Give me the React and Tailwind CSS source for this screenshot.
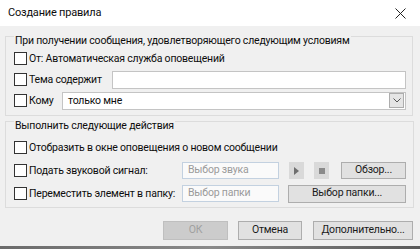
import React from 'react';

const font = { fontFamily: 'Roboto, "Noto Sans", sans-serif', letterSpacing: '-0.2px' };

function Check() {
  return <span className='w-[13px] h-[13px] border border-[#333333] bg-white shrink-0' />;
}

function Btn({ children, className = '' }) {
  return (
    <button className={`h-[17px] shrink-0 border border-[#adadad] bg-[#e1e1e1] text-[10.5px] leading-none text-[#1a1a1a] flex items-center justify-center ${className}`}>
      {children}
    </button>
  );
}

function Disabled({ placeholder }) {
  return (
    <div className='w-[97px] h-[17px] shrink-0 border border-[#c3d1e0] bg-[#fafafa] text-[#9a9a9a] px-[5px] flex items-center leading-none'>
      {placeholder}
    </div>
  );
}

export default function App() {
  return (
    <div className='w-[420px] h-[249px] bg-[#f0f0f0] flex flex-col text-[#0d0d0d] text-[10.5px] whitespace-nowrap overflow-hidden' style={font}>
      {/* Title bar */}
      <div className='h-[26px] bg-white flex items-center justify-between pl-[8px] pr-[14px] shrink-0'>
        <span className='text-[11px]'>Создание правила</span>
        <svg width='11' height='11' viewBox='0 0 11 11'>
          <path d='M0.5 0.5 L10.5 10.5 M10.5 0.5 L0.5 10.5' stroke='#222' strokeWidth='1' />
        </svg>
      </div>

      {/* Conditions */}
      <fieldset className='ml-[5px] w-[408px] shrink-0 border border-[#dcdcdc] pl-[8px] pr-[6px] pb-[4px]'>
        <legend className='px-[1px] pt-[8px] leading-[13px]'>При получении сообщения, удовлетворяющего следующим условиям</legend>
        <div className='h-[21px] mt-[1px] flex items-center'>
          <Check />
          <span className='ml-[2px]'>От: Автоматическая служба оповещений</span>
        </div>
        <div className='h-[21px] flex items-center'>
          <Check />
          <span className='ml-[2px] w-[83px] shrink-0'>Тема содержит</span>
          <div className='flex-1 h-[18px] border border-[#c4c4c4] bg-white' />
        </div>
        <div className='h-[21px] flex items-center'>
          <Check />
          <span className='ml-[2px] w-[33px] shrink-0'>Кому</span>
          <div className='flex-1 h-[18px] border border-[#c4c4c4] bg-white flex items-center justify-between pl-[5px] pr-[1px]'>
            <span>только мне</span>
            <div className='w-[15px] h-[15px] border border-[#adadad] bg-[#e5e5e5] flex items-center justify-center'>
              <svg width='8' height='5' viewBox='0 0 8 5'>
                <path d='M0.5 0.5 L4 4 L7.5 0.5' stroke='#555' fill='none' strokeWidth='1' />
              </svg>
            </div>
          </div>
        </div>
      </fieldset>

      {/* Actions */}
      <fieldset className='mt-[-5px] ml-[5px] w-[408px] shrink-0 border border-[#dcdcdc] pl-[8px] pr-[7px] pb-[2px]'>
        <legend className='px-[1px] pt-[8px] leading-[13px]'>Выполнить следующие действия</legend>
        <div className='h-[23px] mt-[4px] flex items-center'>
          <Check />
          <span className='ml-[2px]'>Отобразить в окне оповещения о новом сообщении</span>
        </div>
        <div className='h-[23px] flex items-center'>
          <Check />
          <span className='ml-[2px] w-[153px] shrink-0'>Подать звуковой сигнал:</span>
          <Disabled placeholder='Выбор звука' />
          <div className='ml-[10px] w-[15px] h-[17px] shrink-0 bg-[#d9d9d9] flex items-center justify-center'>
            <svg width='5' height='8' viewBox='0 0 5 8'>
              <path d='M0 0 L5 4 L0 8 Z' fill='#6f6f6f' />
            </svg>
          </div>
          <div className='ml-[10px] w-[15px] h-[17px] shrink-0 bg-[#d9d9d9] flex items-center justify-center'>
            <span className='w-[6px] h-[6px] bg-[#8a8a8a]' />
          </div>
          <Btn className='ml-[12px] w-[65px]'>Обзор...</Btn>
        </div>
        <div className='h-[23px] flex items-center'>
          <Check />
          <span className='ml-[2px] w-[153px] shrink-0'>Переместить элемент в папку:</span>
          <Disabled placeholder='Выбор папки' />
          <Btn className='ml-[9px] w-[118px] h-[18px]'>Выбор папки...</Btn>
        </div>
      </fieldset>

      {/* Footer */}
      <div className='flex justify-end pr-[7px] mt-[13px]'>
        <button className='w-[65px] h-[19px] border border-[#bfbfbf] bg-[#cccccc] text-[#a0a0a0] text-[10.5px] leading-none'>ОК</button>
        <Btn className='ml-[10px] w-[64px] h-[19px]'>Отмена</Btn>
        <Btn className='ml-[11px] w-[100px] h-[19px]'>Дополнительно...</Btn>
      </div>

      <div className='mt-auto h-[3px] shrink-0 bg-gradient-to-r from-[#6b6b6b] via-[#8a8a8a] to-[#5a5a5a]' />
    </div>
  );
}
